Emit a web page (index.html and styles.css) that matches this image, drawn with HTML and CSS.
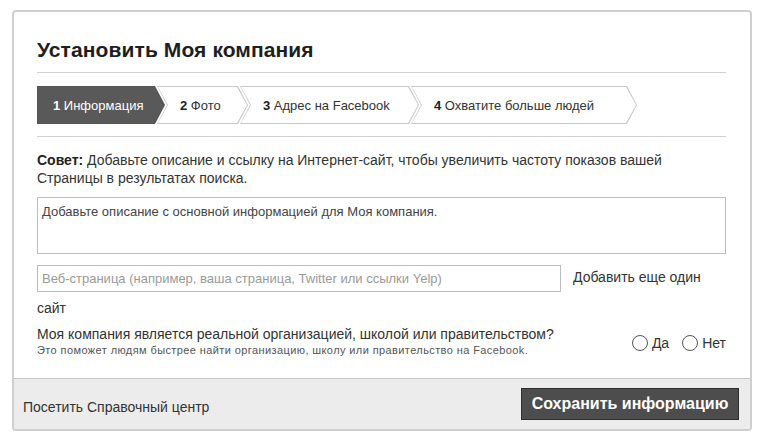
FILE: index.html
```html
<!DOCTYPE html>
<html lang="ru">
<head>
<meta charset="utf-8">
<title>Установить Моя компания</title>
<link rel="stylesheet" href="styles.css">
</head>
<body>
<div class="card">
  <div class="card-body">
    <h1 class="title">Установить Моя компания</h1>
    <div class="steps-row">
      <div class="steps">
        <div class="step step-first step-active"><span class="step-in"><b>1</b>&nbsp;Информация</span></div>
        <div class="step step-2"><span class="step-in"><b>2</b>&nbsp;Фото</span></div>
        <div class="step step-3"><span class="step-in"><b>3</b>&nbsp;Адрес на Facebook</span></div>
        <div class="step step-4"><span class="step-in"><b>4</b>&nbsp;Охватите больше людей</span></div>
      </div>
    </div>
    <p class="tip"><b>Совет:</b> Добавьте описание и ссылку на Интернет-сайт, чтобы увеличить частоту показов вашей<br>Страницы в результатах поиска.</p>
    <textarea class="desc">Добавьте описание с основной информацией для Моя компания.</textarea>
    <div class="web"><input class="url" type="text" placeholder="Веб-страница (например, ваша страница, Twitter или ссылки Yelp)"><a class="add-link">Добавить еще один сайт</a></div>
    <div class="question">
      <div class="q-text">
        <div class="q-main">Моя компания является реальной организацией, школой или правительством?</div>
        <div class="q-sub">Это поможет людям быстрее найти организацию, школу или правительство на Facebook.</div>
      </div>
      <div class="radios">
        <label class="radio"><span class="circle"></span>Да</label>
        <label class="radio"><span class="circle"></span>Нет</label>
      </div>
    </div>
  </div>
  <div class="card-footer">
    <a class="help">Посетить Справочный центр</a>
    <button class="save">Сохранить информацию</button>
  </div>
</div>
</body>
</html>
```
FILE: styles.css
```css
* { box-sizing: border-box; }
html, body { margin: 0; padding: 0; background: #fff; }
body {
  font-family: "Liberation Sans", Arial, sans-serif;
  color: #333;
  font-size: 14px;
}
.card {
  margin: 10px 0 0 12px;
  width: 740px;
  height: 421px;
  border: 2px solid #cfcfcf;
  border-radius: 4px;
  display: flex;
  flex-direction: column;
  overflow: hidden;
}
.card-body {
  flex: 1;
  padding: 26px 24px 0 23px;
}
.title {
  margin: 0;
  font-size: 21px;
  line-height: 24px;
  font-weight: bold;
  color: #1e1e1e;
  letter-spacing: 0.1px;
  padding-bottom: 10px;
  border-bottom: 1px solid #d2d2d2;
}
.steps-row {
  padding: 13px 0 12px;
  border-bottom: 1px solid #d2d2d2;
}
.steps { display: flex; }
.step {
  height: 38px;
  padding: 1px;
  margin-left: -8px;
  background: #c9c9c9;
  clip-path: polygon(0 0, calc(100% - 10px) 0, 100% 50%, calc(100% - 10px) 100%, 0 100%, 10px 50%);
}
.step-in {
  display: flex;
  align-items: center;
  height: 100%;
  background: #fff;
  font-size: 13px;
  color: #333;
  padding-left: 22px;
  white-space: nowrap;
  clip-path: polygon(0 0, calc(100% - 10px) 0, 100% 50%, calc(100% - 10px) 100%, 0 100%, 10px 50%);
}
.step-in b { color: #222; }
.step-first {
  margin-left: 0;
  clip-path: polygon(0 0, calc(100% - 10px) 0, 100% 50%, calc(100% - 10px) 100%, 0 100%);
}
.step-first .step-in {
  padding-left: 15px;
  clip-path: polygon(0 0, calc(100% - 10px) 0, 100% 50%, calc(100% - 10px) 100%, 0 100%);
}
.step-active { background: #555; }
.step-active .step-in { background: #595959; color: #fff; }
.step-active .step-in b { color: #fff; }
.step-first { width: 128px; }
.step-2 { width: 91px; }
.step-3 { width: 179px; }
.step-4 { width: 226px; }

.tip {
  margin: 14px 0 0;
  line-height: 18px;
  font-size: 14px;
  color: #333;
}
.tip b { color: #222; }
.desc {
  display: block;
  width: 100%;
  height: 57px;
  margin-top: 10px;
  border: 1px solid #bdbdbd;
  padding: 6px 4px;
  font-family: inherit;
  font-size: 13px;
  line-height: 16px;
  color: #444;
  resize: none;
  outline: none;
}
.web {
  margin-top: 8px;
  line-height: 31px;
  font-size: 14px;
}
.url {
  display: inline-block;
  vertical-align: middle;
  width: 524px;
  height: 27px;
  margin: 0 12px 0 0;
  border: 1px solid #bdbdbd;
  padding: 0 4px;
  font-family: inherit;
  font-size: 13px;
  color: #444;
  outline: none;
}
.url::placeholder { color: #9a9a9a; }
.add-link { color: #333; }
.question {
  margin-top: 2px;
  display: flex;
  align-items: center;
  justify-content: space-between;
}
.q-main { font-size: 14px; line-height: 17px; color: #333; }
.q-sub { font-size: 11px; line-height: 14px; color: #555; letter-spacing: 0.4px; }
.radios { display: flex; align-items: center; gap: 13px; padding-top: 2px; }
.radio { display: flex; align-items: center; font-size: 14px; color: #333; }
.circle {
  width: 16px;
  height: 16px;
  border: 1px solid #555;
  border-radius: 50%;
  background: #fff;
  margin-right: 4px;
}
.card-footer {
  height: 51px;
  border-top: 1px solid #c9c9c9;
  background: #ececec;
  display: flex;
  align-items: flex-start;
  justify-content: space-between;
  padding: 9px 11px 0 9px;
}
.help {
  font-size: 14px;
  color: #333;
  margin-top: 11px;
}
.save {
  height: 32px;
  width: 218px;
  background: #4d4d4d;
  border: 1px solid #2e2e2e;
  color: #fff;
  font-family: inherit;
  font-weight: bold;
  font-size: 16px;
  padding: 0;
}
```
